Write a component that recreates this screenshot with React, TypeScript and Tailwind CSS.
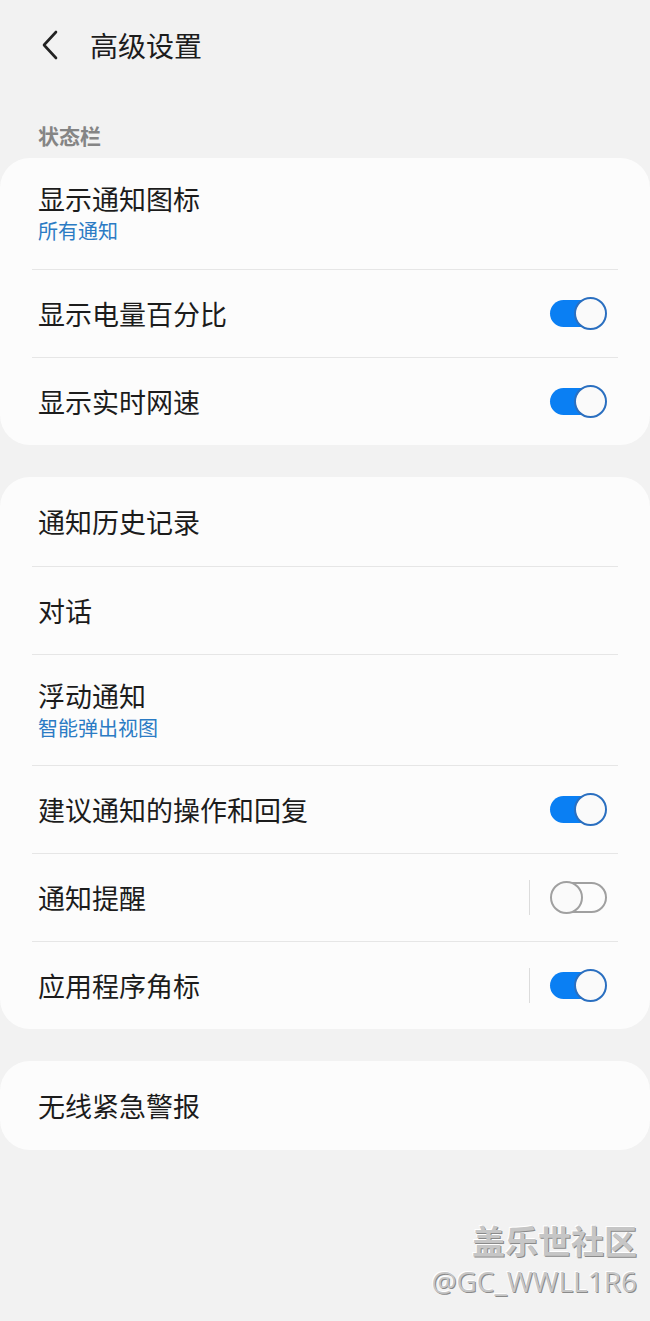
import React from 'react';

type Row = {
  title: string;
  sub?: string;
  toggle?: 'on' | 'off';
  split?: boolean;
};

const statusBar: Row[] = [
  { title: '显示通知图标', sub: '所有通知' },
  { title: '显示电量百分比', toggle: 'on' },
  { title: '显示实时网速', toggle: 'on' },
];

const notifications: Row[] = [
  { title: '通知历史记录' },
  { title: '对话' },
  { title: '浮动通知', sub: '智能弹出视图' },
  { title: '建议通知的操作和回复', toggle: 'on' },
  { title: '通知提醒', toggle: 'off', split: true },
  { title: '应用程序角标', toggle: 'on', split: true },
];

const alerts: Row[] = [{ title: '无线紧急警报' }];

function Toggle({ on }: { on: boolean }) {
  return (
    <div className="relative w-[57px] h-[33px] shrink-0">
      {on ? (
        <>
          <div className="absolute left-0 right-[2px] top-[3px] h-[27px] rounded-full bg-[#0a7ff3]" />
          <div className="absolute right-0 top-0 w-[33px] h-[33px] rounded-full bg-[#fafafa] border-2 border-[#2a6fc0]" />
        </>
      ) : (
        <>
          <div className="absolute left-[2px] right-0 top-[1px] h-[31px] rounded-full border-2 border-[#a0a0a0]" />
          <div className="absolute left-0 top-0 w-[33px] h-[33px] rounded-full bg-[#fafafa] border-2 border-[#a0a0a0]" />
        </>
      )}
    </div>
  );
}

function Card({ rows }: { rows: Row[] }) {
  return (
    <div className="bg-[#fcfcfc] rounded-[30px]">
      {rows.map((r, i) => (
        <div key={r.title}>
          {i > 0 && <div className="mx-[32px] h-px bg-[#e6e6e6]" />}
          <div
            className={
              'flex items-center pl-[38px] pr-[43px] ' +
              (r.sub ? (i === 0 ? 'h-[111px]' : 'h-[110px]') : i === 0 ? 'h-[89px]' : 'h-[87px]')
            }
          >
            <div className="flex-1 flex flex-col">
              <span className="text-[27px] leading-[33px] text-[#1c1c1c]">{r.title}</span>
              {r.sub && (
                <span className="mt-[2px] text-[20px] leading-[28px] text-[#2b7bc4]">{r.sub}</span>
              )}
            </div>
            {r.split && <div className="w-px h-[35px] bg-[#dcdcdc] mr-[20px]" />}
            {r.toggle && <Toggle on={r.toggle === 'on'} />}
          </div>
        </div>
      ))}
    </div>
  );
}

export default function App() {
  return (
    <main className="min-h-[1321px] bg-[#f2f2f2] font-['Noto_Sans_CJK_SC',sans-serif] pb-4">
      <header className="h-[90px] flex items-center pl-[40px]">
        <svg width="20" height="32" viewBox="0 0 20 32" fill="none" className="mr-[30px]">
          <path d="M16 3 L4 16 L16 29" stroke="#222" strokeWidth="2.6" strokeLinecap="round" strokeLinejoin="round" />
        </svg>
        <h1 className="text-[28px] leading-[36px] text-[#1c1c1c]">高级设置</h1>
      </header>

      <div className="pt-[34px] pb-[12px] pl-[38px] text-[21px] leading-[22px] font-bold text-[#858585]">
        状态栏
      </div>

      <div className="flex flex-col gap-[32px]">
        <Card rows={statusBar} />
        <Card rows={notifications} />
        <Card rows={alerts} />
      </div>

      <div className="mt-[70px] pr-[13px] flex flex-col items-end">
        <span className="text-[33px] leading-[40px] font-bold text-[#c6c6c6] [text-shadow:1px_1px_0_#8a8a8a,-1px_-1px_0_#ffffff]">
          盖乐世社区
        </span>
        <span className="mt-[3px] text-[28px] leading-[36px] font-['Open_Sans',sans-serif] text-[#c6c6c6] [text-shadow:1px_1px_0_#8a8a8a,-1px_-1px_0_#ffffff]">
          @GC_WWLL1R6
        </span>
      </div>
    </main>
  );
}
